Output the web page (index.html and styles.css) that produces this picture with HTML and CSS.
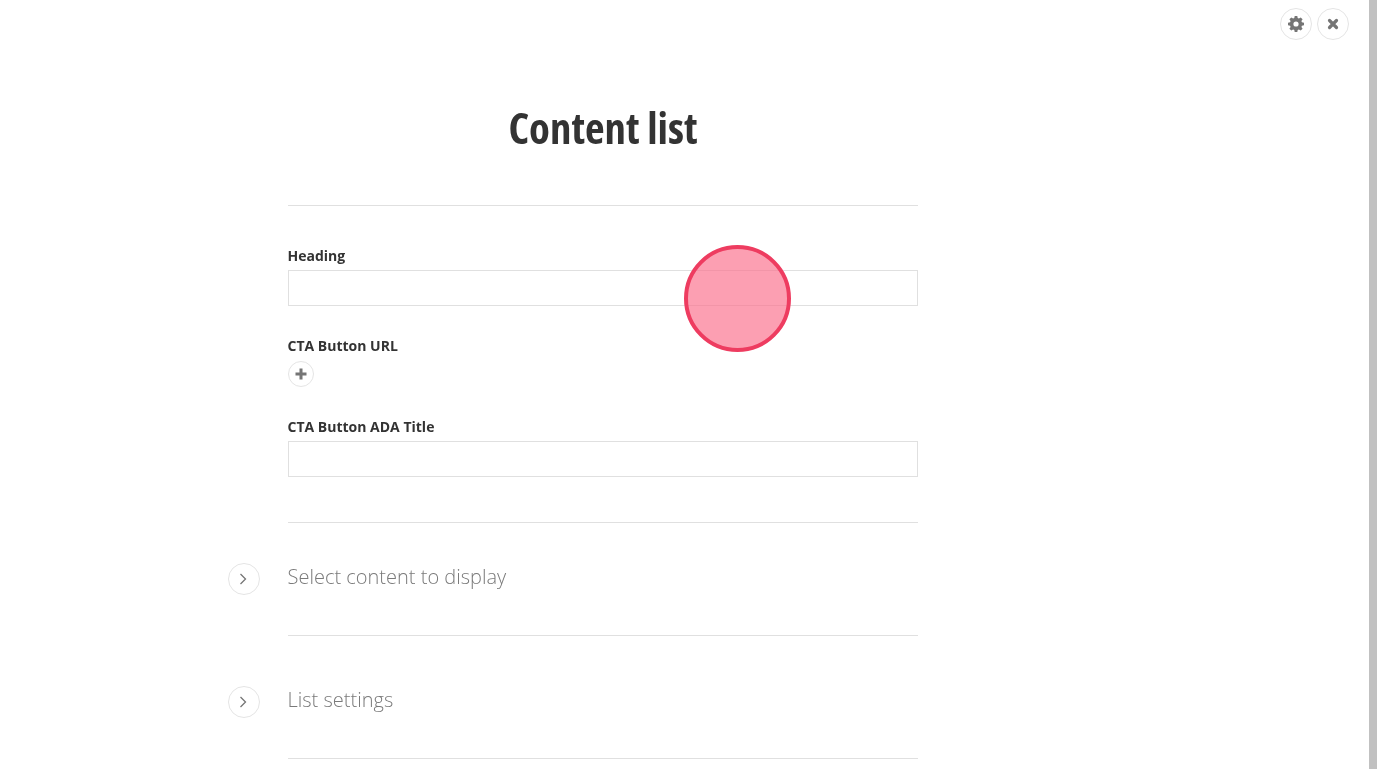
FILE: index.html
```html
<!doctype html>
<html lang="en">
    <head>
        <title>Content list</title>
        <meta charset="utf-8" />
        <meta name="viewport" content="width=device-width, initial-scale=1"/>
        <link rel="stylesheet" href="styles.css">
    </head>
    <body>
        <div class="toolbar">
            <button type="button" class="round-btn" aria-label="Settings">
                <svg width="16" height="16" viewBox="0 0 16 16"><path fill="#757575" fill-rule="evenodd" d="M6.7 0h2.6l.4 2.1 1.2.5L12.700 1.400l1.900 1.900-1.200 1.800.5 1.200 2.100.4v2.600l-2.100.4-.5 1.200 1.200 1.800-1.900 1.900-1.800-1.200-1.200.5-.4 2.100H6.700l-.4-2.100-1.200-.5-1.800 1.200-1.900-1.900 1.200-1.800-.5-1.200L0 9.300V6.700l2.100-.4.500-1.200-1.200-1.800 1.900-1.900 1.800 1.200 1.200-.5zM8 5.400a2.600 2.600 0 1 0 0 5.200 2.600 2.600 0 0 0 0-5.200z"/></svg>
            </button>
            <button type="button" class="round-btn" aria-label="Close">
                <svg width="12" height="12" viewBox="0 0 12 12"><path stroke="#757575" stroke-width="3.200" stroke-linecap="round" d="M2.500 2.500l7 7M9.500 2.500l-7 7"/></svg>
            </button>
        </div>

        <div class="scrollbar"></div>

        <div class="editor" role="main">
            <h1 class="title">Content list</h1>

            <div class="fields">
                <div class="field">
                    <label for="heading">Heading</label>
                    <input type="text" id="heading">
                </div>
                <div class="field field-link">
                    <label>CTA Button URL</label>
                    <button type="button" class="round-btn add-btn" aria-label="Add">
                        <svg width="12" height="12" viewBox="0 0 12 12"><path stroke="#757575" stroke-width="3" d="M6 .5v11M.5 6h11"/></svg>
                    </button>
                </div>
                <div class="field">
                    <label for="ada-title">CTA Button ADA Title</label>
                    <input type="text" id="ada-title">
                </div>
            </div>

            <div class="group">
                <button type="button" class="round-btn toggle" aria-label="Expand">
                    <svg width="10" height="12" viewBox="0 0 10 12"><path fill="none" stroke="#757575" stroke-width="1.300" d="M1.500 1L6.500 6l-5 5"/></svg>
                </button>
                <h2>Select content to display</h2>
            </div>
            <div class="group">
                <button type="button" class="round-btn toggle" aria-label="Expand">
                    <svg width="10" height="12" viewBox="0 0 10 12"><path fill="none" stroke="#757575" stroke-width="1.300" d="M1.500 1L6.500 6l-5 5"/></svg>
                </button>
                <h2>List settings</h2>
            </div>
        </div>

        <div class="tap-marker"></div>
    </body>
</html>
```

FILE: styles.css
```css
html, body {
    height: 100%;
    overflow: hidden;
}
body {
    background-color: #fff;
    color: #333;
    font-family: "Open Sans", sans-serif;
    margin: 0;
}
.scrollbar {
    background-color: #c1c1c1;
    bottom: 0;
    position: fixed;
    right: 0;
    top: 0;
    width: 8px;
}
.toolbar {
    display: flex;
    gap: 5px;
    position: fixed;
    right: 28px;
    top: 8px;
}
.round-btn {
    align-items: center;
    background-color: #fff;
    border: 1px solid #e4e4e4;
    border-radius: 50%;
    box-sizing: border-box;
    display: flex;
    height: 32px;
    justify-content: center;
    padding: 0;
    width: 32px;
}
.editor {
    box-sizing: border-box;
    margin-left: 288px;
    width: 630px;
    will-change: transform;
}
.title {
    border-bottom: 1px solid #e0e0e0;
    font-size: 42.800px;
    font-stretch: condensed;
    font-weight: 700;
    height: 107px;
    line-height: 60px;
    margin: 0;
    padding-top: 98px;
    text-align: center;
}
.fields {
    border-bottom: 1px solid #e0e0e0;
    padding: 40px 0 45px;
}
.field {
    margin-bottom: 30px;
}
.field:last-child {
    margin-bottom: 0;
}
.field label {
    display: block;
    font-size: 14px;
    font-weight: 700;
    line-height: 20px;
    margin-bottom: 4px;
    margin-left: -0.5px;
}
.field input {
    border: 1px solid #e0e0e0;
    box-sizing: border-box;
    display: block;
    height: 36px;
    width: 100%;
}
.add-btn {
    height: 26px;
    margin-top: 5px;
    width: 26px;
}
.group {
    align-items: center;
    border-bottom: 1px solid #e0e0e0;
    display: flex;
    height: 112px;
    position: relative;
}
.group + .group {
    height: 112px;
    padding-top: 10px;
}
.group h2 {
    color: #7a7a7a;
    font-size: 20px;
    font-weight: 300;
    margin: 0 0 6px -0.5px;
}
.toggle {
    left: -60px;
    position: absolute;
}
.tap-marker {
    background-color: rgba(251, 113, 141, 0.68);
    border: 4.5px solid #ee3c60;
    border-radius: 50%;
    box-sizing: border-box;
    height: 107px;
    left: 684px;
    position: fixed;
    top: 245px;
    width: 107px;
}
```
